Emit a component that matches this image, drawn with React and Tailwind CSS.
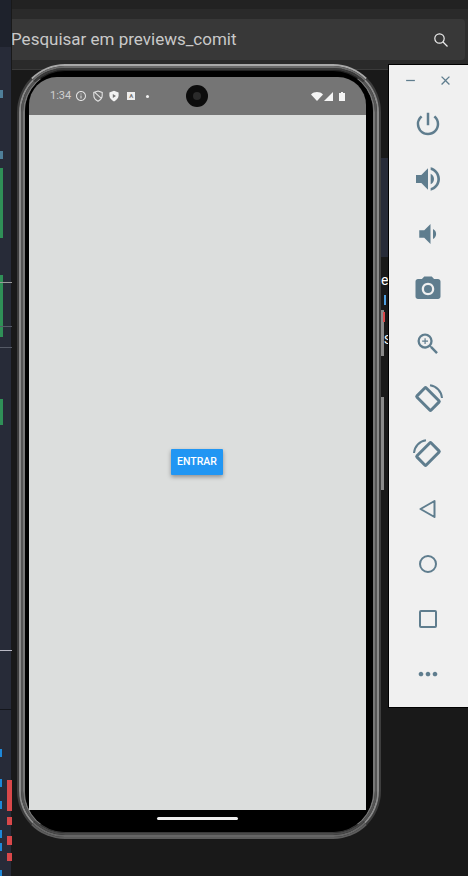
import { MdPowerSettingsNew, MdVolumeUp, MdVolumeDown, MdCameraAlt, MdZoomIn, MdClose, MdRemove, MdMoreHoriz, MdInfoOutline } from 'react-icons/md';

// left edge of the IDE window behind the emulator
const sideMarks = [
    'top-[90px] h-[8px] w-[3px] bg-[#4f7f99]',
    'top-[151px] h-[8px] w-[3px] bg-[#4f7f99]',
    'top-[168px] h-[70px] w-[3px] bg-[#2f8f57]',
    'top-[275px] h-[62px] w-[3px] bg-[#2f8f57]',
    'top-[399px] h-[26px] w-[3px] bg-[#2f8f57]',
    'top-[282px] h-[1px] w-[12px] bg-[#9a9a9a]',
    'top-[326px] h-[1px] w-[12px] bg-[#555a66]',
    'top-[347px] h-[1px] w-[12px] bg-[#555a66]',
    'top-[650px] h-[1px] w-[12px] bg-[#b9b9c4]',
    'top-[709px] h-[1px] w-[12px] bg-[#14161c]',
    'top-[749px] h-[8px] w-[2px] bg-[#1e88d8]',
    'top-[779px] h-[8px] w-[2px] bg-[#1e88d8]',
    'top-[801px] h-[8px] w-[2px] bg-[#1e88d8]',
    'top-[830px] h-[8px] w-[2px] bg-[#1e88d8]',
    'top-[843px] h-[8px] w-[2px] bg-[#1e88d8]',
    'top-[870px] h-[6px] w-[2px] bg-[#1e88d8]',
    'top-[780px] left-[7px] h-[31px] w-[5px] bg-[#d9484a]',
    'top-[817px] left-[7px] h-[8px] w-[5px] bg-[#d9484a]',
    'top-[836px] left-[7px] h-[9px] w-[5px] bg-[#d9484a]',
    'top-[853px] left-[7px] h-[8px] w-[5px] bg-[#d9484a]',
];

const RotateLeft = () => (
    <svg width="32" height="32" viewBox="0 0 32 32" fill="none" stroke="#5f7d8e">
        <rect x="9.5" y="6" width="13" height="20" rx="1" strokeWidth="3" transform="rotate(-45 16 16)" />
        <path d="M18 2.2 A14 14 0 0 1 30 15" strokeWidth="2" />
    </svg>
);

const RotateRight = () => (
    <svg width="32" height="32" viewBox="0 0 32 32" fill="none" stroke="#5f7d8e">
        <rect x="9.5" y="6" width="13" height="20" rx="1" strokeWidth="3" transform="rotate(45 16 16)" />
        <path d="M14 2.2 A14 14 0 0 0 2 15" strokeWidth="2" />
    </svg>
);

const panelIcons = [
    <MdPowerSettingsNew key="power" size={30} color="#5f7d8e" />,
    <MdVolumeUp key="up" size={32} color="#5f7d8e" />,
    <MdVolumeDown key="down" size={30} color="#5f7d8e" />,
    <MdCameraAlt key="camera" size={30} color="#5f7d8e" />,
    <MdZoomIn key="zoom" size={28} color="#5f7d8e" />,
    <RotateLeft key="rotate-left" />,
    <RotateRight key="rotate-right" />,
    <svg key="back" width="20" height="20" viewBox="0 0 20 20" fill="none" stroke="#5f7d8e" strokeWidth="2" strokeLinejoin="round"><path d="M16.5 2 L2.5 10 L16.5 18 Z" /></svg>,
    <svg key="home" width="20" height="20" viewBox="0 0 20 20" fill="none" stroke="#5f7d8e" strokeWidth="2"><circle cx="10" cy="10" r="8" /></svg>,
    <svg key="square" width="20" height="20" viewBox="0 0 20 20" fill="none" stroke="#5f7d8e" strokeWidth="2"><rect x="2" y="2" width="16" height="16" rx="1" /></svg>,
    <MdMoreHoriz key="more" size={28} color="#5f7d8e" />,
];

function StatusBar() {
    return (
        <div className="relative flex h-[38px] shrink-0 items-center justify-between bg-[#757575] pl-[21px] pr-[21px] font-['Roboto',sans-serif] text-[11px] text-[#cfcfcf]">
            <div className="flex items-center gap-[4px]">
                <span>1:34</span>
                <MdInfoOutline size={12} color="#e2e2e2" />
                <svg width="12" height="12" viewBox="0 0 12 12" fill="none" stroke="#e2e2e2" strokeWidth="1.1" className="ml-[1px]">
                    <path d="M6 1 L10.2 2.4 V5.6 C10.2 8 8.6 10 6 11.2 C3.4 10 1.8 8 1.8 5.6 V2.4 Z M3 2.6 L9.6 8.6" />
                </svg>
                <svg width="12" height="12" viewBox="0 0 12 12">
                    <path d="M6 0.8 L10.6 2.4 V5.6 C10.6 8 8.8 10.2 6 11.4 C3.2 10.2 1.4 8 1.4 5.6 V2.4 Z" fill="#f2f2f2" />
                    <path d="M4.8 4 L8 6 L4.8 8 Z" fill="#757575" />
                </svg>
                <span className="ml-[3px] flex h-[8px] w-[8px] items-center justify-center bg-[#ededed] text-[6px] font-bold leading-none text-[#757575]">A</span>
                <span className="ml-[7px] h-[3px] w-[3px] rounded-full bg-[#f2f2f2]"></span>
            </div>
            <div className="absolute left-[157px] top-[8px] flex h-[22px] w-[22px] items-center justify-center rounded-full bg-[#0c0c0c]">
                <div className="h-[8px] w-[8px] rounded-full bg-[#2a2a2a]"></div>
            </div>
            <div className="flex items-center gap-[1px]">
                <svg width="12" height="9" viewBox="0 0 12 9"><path d="M0 2.4 C3.4 -0.7 8.6 -0.7 12 2.4 L6 9 Z" fill="#f5f5f5" /></svg>
                <svg width="9" height="9" viewBox="0 0 9 9"><path d="M9 0 V9 H0 Z" fill="#f5f5f5" /></svg>
                <svg width="6" height="9" viewBox="0 0 6 9" className="ml-[5px]"><path d="M2 0 H4 V1 H6 V9 H0 V1 H2 Z" fill="#f5f5f5" /></svg>
            </div>
        </div>
    );
}

function Phone() {
    return (
        <div className="absolute left-[17px] top-[64px] h-[775px] w-[364px] rounded-[48px] border-2 border-[#3e3e3e] border-t-[#a8a8a8] border-b-[#5c5c5c]">
            <div className="h-full rounded-[46px] border-2 border-[#8a8a8a] border-t-[#6a6a6a] border-b-[#666666]">
                <div className="h-full rounded-[44px] border-2 border-[#555555] border-t-[#3a3a3a] border-b-[#4a4a4a]">
                    <div className="h-full rounded-[42px] border-2 border-t-[1px] border-b-[1px] border-[#777777] border-t-[#222222] border-b-[#3a3a3a]">
                        <div className="flex h-full flex-col rounded-[40px] bg-black pl-[4px] pr-[7px] pt-[6px]">
                            <div className="flex h-[733px] flex-col overflow-hidden rounded-t-[28px]">
                                <StatusBar />
                                <div className="flex flex-1 items-center justify-center bg-[#dcdedd] pb-[2px] pr-[1px]">
                                    <button className="flex h-[26px] w-[52px] items-center justify-center rounded-[1px] bg-[#2196f3] font-['Roboto',sans-serif] text-[10.5px] font-medium text-white shadow-[0_2px_4px_rgba(0,0,0,0.35)]">ENTRAR</button>
                                </div>
                            </div>
                            <div className="flex flex-1 justify-center pt-[7px]">
                                <div className="h-[3px] w-[81px] rounded-full bg-[#eeeeee]"></div>
                            </div>
                        </div>
                    </div>
                </div>
            </div>
        </div>
    );
}

function ControlPanel() {
    return (
        <div className="absolute left-[388px] top-[64px] flex h-[644px] w-[80px] flex-col border border-r-0 border-black bg-[#f0f0f0]">
            <div className="flex h-[31px] shrink-0 items-center justify-between pl-[14px] pr-[15px]">
                <MdRemove size={15} color="#5f7d8e" />
                <MdClose size={15} color="#5f7d8e" />
            </div>
            {panelIcons.map((icon, index) => (
                <div key={index} className="flex h-[55px] shrink-0 items-center justify-center pr-[1px]">
                    {icon}
                </div>
            ))}
        </div>
    );
}

export default function App() {
    return (
        <div className="relative h-[876px] w-[468px] overflow-hidden bg-[#191919] font-['Roboto',sans-serif]">
            {/* IDE window behind the emulator */}
            <div className="h-[9px] bg-[#222222]"></div>
            <div className="h-[10px] bg-[#2a2a2a]"></div>
            <div className="flex h-[41px] items-center bg-[#2e2e2e] pl-[12px] pr-[3px]">
                <div className="flex h-full flex-1 items-center justify-between rounded-r-[4px] bg-[#383838] pr-[17px]">
                    <span className="-ml-[1px] text-[17px] text-[#c9c9c9]">Pesquisar em previews_comit</span>
                    <svg width="14" height="14" viewBox="0 0 14 14" fill="none" stroke="#ececec" strokeWidth="1.2">
                        <circle cx="5.5" cy="5.5" r="4.7" />
                        <path d="M9 9 L13.5 13.5" />
                    </svg>
                </div>
            </div>
            <div className="h-[10px] border-b border-[#3a3a3a] bg-[#2a2a2a]"></div>

            <div className="absolute inset-y-0 left-0 w-[12px] border-r border-[#191919] bg-[#272b38]">
                {sideMarks.map((mark, index) => (
                    <div key={index} className={`absolute left-0 ${mark}`}></div>
                ))}
                <div className="absolute inset-x-0 top-0 h-[47px] bg-[#1e222c]"></div>
            </div>

            {/* bits of the window visible between phone and panel */}
            <div className="absolute left-[381px] top-[158px] h-[99px] w-[7px] bg-[#272b38]"></div>
            <span className="absolute left-[381px] top-[270px] text-[14px] text-white">e</span>
            <div className="absolute left-[381px] top-[310px] h-[46px] w-[3px] bg-[#8a8a8a]"></div>
            <div className="absolute left-[384px] top-[295px] h-[10px] w-[2px] bg-[#4f9fe0]"></div>
            <div className="absolute left-[383px] top-[312px] h-[10px] w-[2px] bg-[#d9484a]"></div>
            <span className="absolute left-[384px] top-[330px] text-[13px] text-white">S</span>
            <div className="absolute left-[381px] top-[397px] h-[93px] w-[3px] bg-[#8a8a8a]"></div>

            <Phone />
            <ControlPanel />
        </div>
    );
}
